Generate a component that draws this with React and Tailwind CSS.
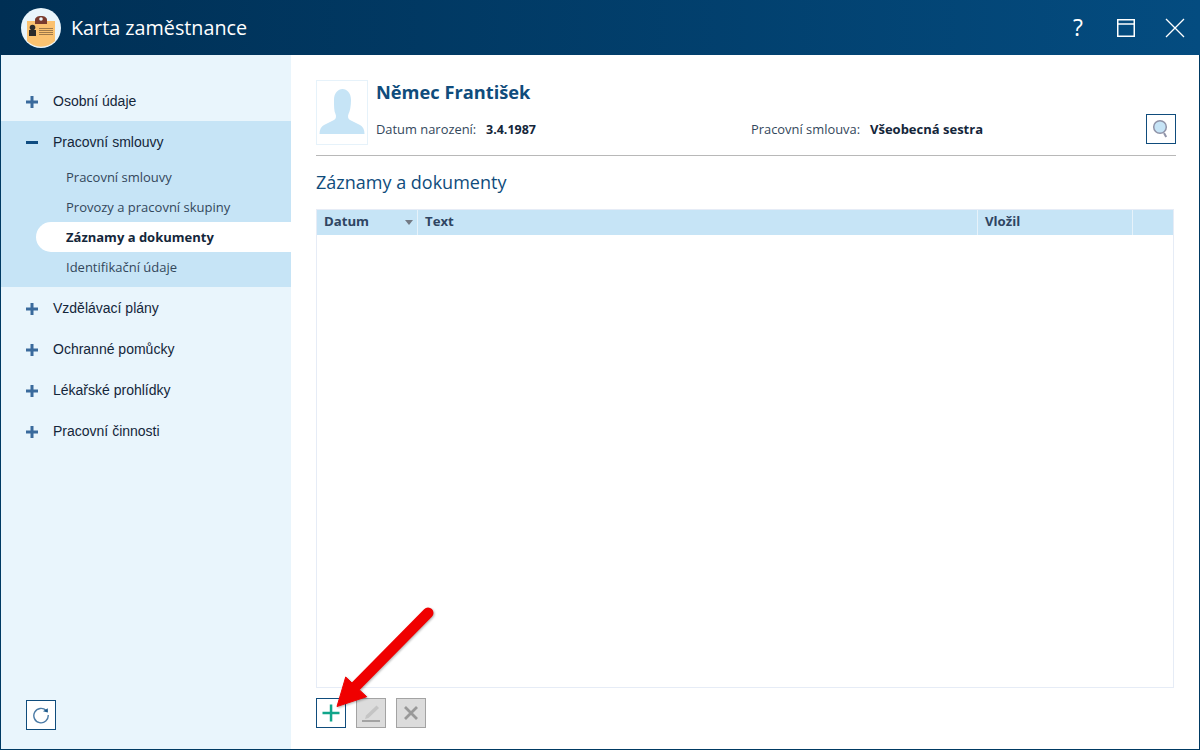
import React from 'react';

const font = "font-['Open_Sans',sans-serif]";

function Plus() {
    return (
        <svg width="12" height="12" viewBox="0 0 12 12" className="shrink-0">
            <path d="M4.500 0h3v4.500H12v3H7.500V12h-3V7.500H0v-3h4.500z" fill="#3a6a9c" />
        </svg>
    );
}

function Minus() {
    return (
        <svg width="12" height="12" viewBox="0 0 12 12" className="shrink-0">
            <rect x="0" y="4" width="12" height="3" fill="#0f4c81" />
        </svg>
    );
}

function MenuItem({ label, open }) {
    return (
        <div className="flex h-[41px] items-center pl-[25px] pt-[2px]">
            {open ? <Minus /> : <Plus />}
            <span className="ml-[15px] font-['Liberation_Sans',sans-serif] text-[14px] text-[#14263a]">{label}</span>
        </div>
    );
}

function SubItem({ label, active }) {
    return (
        <div className={`ml-[35px] flex h-[30px] items-center rounded-l-[15px] pl-[30px] pt-[2px] text-[13px] ${active ? 'bg-white font-bold text-[#14263a]' : 'text-[#33475b]'}`}>
            {label}
        </div>
    );
}

function Sidebar() {
    return (
        <div className="flex w-[290px] shrink-0 flex-col bg-[#e9f5fc] pt-[25px]">
            <MenuItem label="Osobní údaje" />
            <div className="bg-[#c6e4f6] pb-[5px]">
                <MenuItem label="Pracovní smlouvy" open />
                <SubItem label="Pracovní smlouvy" />
                <SubItem label="Provozy a pracovní skupiny" />
                <SubItem label="Záznamy a dokumenty" active />
                <SubItem label="Identifikační údaje" />
            </div>
            <MenuItem label="Vzdělávací plány" />
            <MenuItem label="Ochranné pomůcky" />
            <MenuItem label="Lékařské prohlídky" />
            <MenuItem label="Pracovní činnosti" />
            <div className="mt-auto pb-[19px] pl-[25px]">
                <button className="flex h-[30px] w-[30px] items-center justify-center border border-[#0f4c7c] bg-white">
                    <svg width="18" height="18" viewBox="0 0 18 18" fill="none">
                        <path d="M14.200 4.600A7.200 7.200 0 1 0 16.200 9" stroke="#4b7ba6" strokeWidth="1.400" />
                        <path d="M11 5.200 15.800 2.300 15.900 6.600z" fill="#1d5a8c" />
                    </svg>
                </button>
            </div>
        </div>
    );
}

function Header() {
    return (
        <div className="flex">
            <div className="flex h-[65px] w-[52px] shrink-0 items-end justify-center overflow-hidden border border-[#e6f2fa] bg-white">
                <svg width="46" height="56" viewBox="0 0 46 56">
                    <path d="M15 12c0-7 4-11 8.500-11S32 5 32 12c0 6-1 11-2.500 14-1 2-.5 5 1.500 6l10 5c3 1.500 4.500 5 4.500 9H.5c0-4 1.500-7.500 4.500-9l10-5c2-1 2.500-4 1.500-6C15 23 15 18 15 12z" fill="#c6e4f6" />
                </svg>
            </div>
            <div className="ml-[8px] flex-1">
                <div className="mt-[-1px] text-[18.250px] leading-[26px] font-bold text-[#0f4c7c]">Němec František</div>
                <div className="mt-[15px] flex h-[20px] items-center text-[12.900px] text-[#33475b]">
                    <span className="w-[110px]">Datum narození:</span>
                    <span className="w-[265px] text-[12.500px] font-bold text-[#14263a]">3.4.1987</span>
                    <span className="w-[119px]">Pracovní smlouva:</span>
                    <span className="text-[13px] font-bold text-[#14263a]">Všeobecná sestra</span>
                </div>
            </div>
            <button className="mt-[34px] flex h-[30px] w-[30px] items-center justify-center border border-[#0f4c7c] bg-white">
                <svg width="18" height="20" viewBox="0 0 18 20" fill="none">
                    <circle cx="8" cy="8" r="6.300" fill="#c6e4f6" stroke="#8f93a8" strokeWidth="1.500" />
                    <path d="M12 14l2.200 4" stroke="#8f93a8" strokeWidth="2" />
                </svg>
            </button>
        </div>
    );
}

function RecordsTable() {
    return (
        <div className="flex h-[479px] flex-col border border-[#e6ecf6] bg-white">
            <div className="flex h-[25px] bg-[#c6e4f6] text-[13.200px] font-bold text-[#2f4562]">
                <div className="flex w-[101px] items-center justify-between border-r border-[#e6f2fa] pb-[2px] pl-[7px] pr-[4px]">
                    Datum
                    <span className="mt-[2px] h-0 w-0 border-x-[4px] border-t-[5px] border-x-transparent border-t-[#737a85]" />
                </div>
                <div className="flex w-[560px] items-center border-r border-[#e6f2fa] pb-[2px] pl-[7px]">Text</div>
                <div className="flex w-[155px] items-center border-r border-[#e6f2fa] pb-[2px] pl-[7px]">Vložil</div>
            </div>
        </div>
    );
}

function Toolbar() {
    return (
        <div className="mt-[10px] flex gap-[10px]">
            <button className="flex h-[30px] w-[30px] items-center justify-center border border-[#0f4c7c] bg-white">
                <svg width="18" height="18" viewBox="0 0 18 18">
                    <path d="M7.800 .5h2.500v7.300h7.200v2.500h-7.200v7.200H7.800v-7.200H.5V7.800h7.300z" fill="#10a58a" />
                </svg>
            </button>
            <button className="flex h-[30px] w-[30px] items-center justify-center border border-[#a3a3a3] bg-[#dcdcdc]">
                <svg width="20" height="20" viewBox="0 0 20 20" fill="none">
                    <rect x="1" y="17" width="18" height="2" fill="#a3a3a3" />
                    <path d="M4 16 5 12.500 15.500 2.500 18 5 7.500 15z" fill="#c4c4c4" />
                </svg>
            </button>
            <button className="flex h-[30px] w-[30px] items-center justify-center border border-[#a3a3a3] bg-[#dcdcdc]">
                <svg width="16" height="16" viewBox="0 0 16 16" fill="none">
                    <path d="M2 2l12 12M14 2 2 14" stroke="#999999" strokeWidth="2.800" />
                </svg>
            </button>
        </div>
    );
}

function App() {
    return (
        <div className={`relative flex h-[750px] w-[1200px] flex-col overflow-hidden ${font}`}>
            <div className="flex h-[55px] shrink-0 items-center bg-gradient-to-r from-[#002f54] to-[#044c80] pl-[21px] text-white">
                <svg width="40" height="40" viewBox="0 0 40 40">
                    <circle cx="20" cy="20" r="20" fill="#e9f5fc" />
                    <path d="M6 13h28v20a20 20 0 0 1-28 0z" fill="#fbc270" />
                    <path d="M14 16v-4c0-2.500 2.500-4 6-4s6 1.500 6 4v4z" fill="#7a3b2e" />
                    <circle cx="20" cy="11" r="1.800" fill="#e9f5fc" />
                    <circle cx="11.500" cy="19.500" r="2.800" fill="#2b2b2b" />
                    <path d="M8 28v-6h7v6z" fill="#2b2b2b" />
                    <path d="M18 20.500h14M18 22.500h14M18 24.500h14M18 26.500h14" stroke="#a07a4a" strokeWidth="1" />
                </svg>
                <span className="ml-[10px] text-[19.750px]">Karta zaměstnance</span>
                <div className="ml-auto flex items-center">
                    <span className="w-[20px] text-center text-[23px] leading-none">?</span>
                    <svg width="18" height="18" viewBox="0 0 18 18" fill="none" className="ml-[29px]" stroke="white" strokeWidth="1.500">
                        <rect x=".75" y=".75" width="16.500" height="16.500" />
                        <path d="M1 5h16" />
                    </svg>
                    <svg width="20" height="20" viewBox="0 0 20 20" fill="none" className="ml-[30px] mr-[15px]" stroke="white" strokeWidth="1.300">
                        <path d="M1 1l18 18M19 1 1 19" />
                    </svg>
                </div>
            </div>

            <div className="flex min-h-0 flex-1 border-x border-b border-[#003a63]">
                <Sidebar />
                <div className="flex-1 bg-white pl-[25px] pr-[23px] pt-[25px]">
                    <Header />
                    <div className="mt-[10px] border-t border-[#b8b8b8]" />
                    <div className="mt-[14px] text-[18px] leading-[24px] text-[#0f4c7c]">Záznamy a dokumenty</div>
                    <div className="mt-[15px] pr-[2px]">
                        <RecordsTable />
                    </div>
                    <Toolbar />
                </div>
            </div>

            {/* red arrow annotation */}
            <svg width="120" height="120" viewBox="0 0 120 120" className="absolute left-[330px] top-[600px] drop-shadow-[1px_1px_1px_rgba(0,0,0,0.3)]">
                <path d="M98 13 24 88" stroke="#f00000" strokeWidth="11" strokeLinecap="round" />
                <path d="M7 106.500 15.700 77 36.700 96.700z" fill="#f00000" stroke="#f00000" strokeWidth="1" />
            </svg>
        </div>
    );
}

export default App;
